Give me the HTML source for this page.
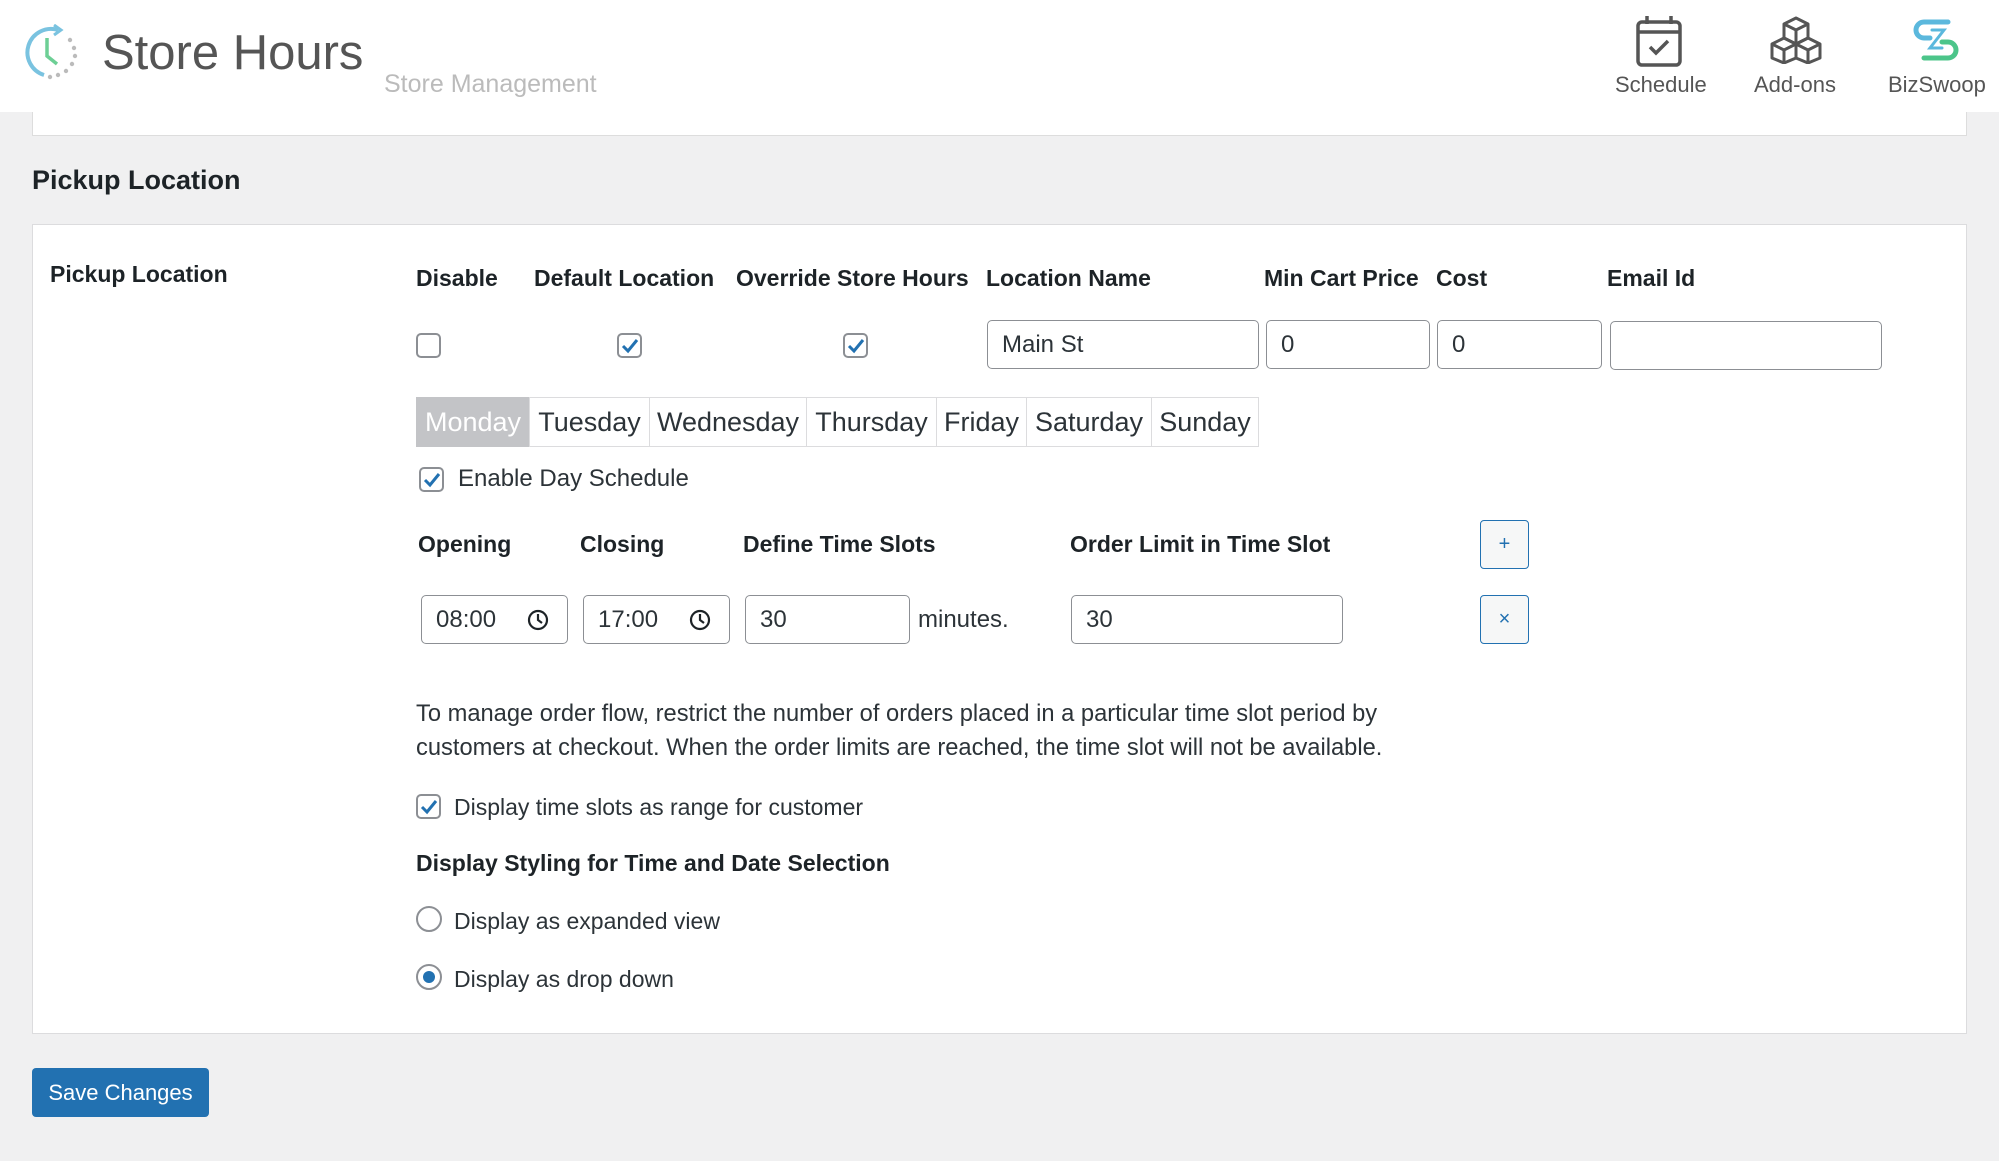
<!DOCTYPE html>
<html><head><meta charset="utf-8"><style>
*{box-sizing:border-box;margin:0;padding:0}
body{width:1999px;height:1161px;background:#f0f0f1;font-family:"Liberation Sans",sans-serif;color:#1d2327;position:relative;overflow:hidden}
.a{position:absolute;white-space:nowrap}
.hdr{left:0;top:0;width:1999px;height:112px;background:#fff}
.b{font-weight:bold;font-size:23px;color:#1d2327}
.cb{position:absolute;width:25px;height:25px;border:2px solid #8c8f94;border-radius:5px;background:#fff}
.cb svg{position:absolute;left:2px;top:2px}
.inp{position:absolute;border:1.5px solid #8c8f94;border-radius:5px;background:#fff;font-size:24px;color:#2c3338;padding-left:14px;display:flex;align-items:center}
.tab{position:absolute;top:397px;height:50px;border:1.5px solid #dcdcde;background:#fff;font-size:27px;color:#2c3338;display:flex;align-items:center;justify-content:center}
.btn{position:absolute;width:49px;height:49px;border:1.5px solid #2271b1;border-radius:4px;background:#f6f7f7;color:#2271b1;font-size:20px;display:flex;align-items:center;justify-content:center}
.t{font-size:23px;color:#2c3338}
.radio{position:absolute;width:26px;height:26px;border:2px solid #8c8f94;border-radius:50%;background:#fff}
</style></head><body>
<div class="a hdr"></div>
<svg class="a" style="left:24px;top:24px" width="58" height="58" viewBox="0 0 58 58">
<path d="M34 6 A23 23 0 1 0 20 51" fill="none" stroke="#7ac3e0" stroke-width="4"/>
<path d="M30 1 L37 6 L30 11" fill="none" stroke="#7ac3e0" stroke-width="3"/>
<path d="M23 14 V32 L33 40" fill="none" stroke="#6dcf95" stroke-width="3.5"/>
<g fill="#bbb"><circle cx="46" cy="16" r="2.2"/><circle cx="50" cy="24" r="2.2"/><circle cx="51" cy="32" r="2.2"/><circle cx="48" cy="40" r="2.2"/><circle cx="42" cy="47" r="2.2"/><circle cx="34" cy="51" r="2.2"/><circle cx="26" cy="53" r="2.2"/></g>
</svg>
<div class="a" style="left:102px;top:25px;font-size:49px;color:#555">Store Hours</div>
<div class="a" style="left:384px;top:70px;font-size:25px;color:#bbb">Store Management</div>
<svg class="a" style="left:1635px;top:14px" width="48" height="54" viewBox="0 0 48 54"><rect x="3" y="8" width="42" height="43" rx="4" fill="none" stroke="#555" stroke-width="3.5"/><line x1="3" y1="18" x2="45" y2="18" stroke="#555" stroke-width="3.5"/><line x1="12" y1="2" x2="12" y2="10" stroke="#555" stroke-width="3.5"/><line x1="36" y1="2" x2="36" y2="10" stroke="#555" stroke-width="3.5"/><path d="M15 33 L21 39 L33 27" fill="none" stroke="#555" stroke-width="3.5"/></svg>
<div class="a" style="left:1615px;top:72px;font-size:22px;color:#555">Schedule</div>
<svg class="a" style="left:1768px;top:16px" width="56" height="48" viewBox="0 0 56 48" fill="none" stroke="#555" stroke-width="3" stroke-linejoin="round"><path d="M28 2 L40 8 V22 L28 28 L16 22 V8 Z M16 8 L28 14 L40 8 M28 14 V28"/><path d="M16 22 L28 28 V42 L16 47 L4 42 V28 Z M4 28 L16 34 L28 28 M16 34 V47"/><path d="M40 22 L52 28 V42 L40 47 L28 42 V28 Z M28 28 L40 34 L52 28 M40 34 V47"/></svg>
<div class="a" style="left:1754px;top:72px;font-size:22px;color:#555">Add-ons</div>
<svg class="a" style="left:1910px;top:18px" width="52" height="44" viewBox="0 0 52 44" fill="none" stroke-width="5" stroke-linecap="round"><path d="M38 4 H14 A8 8 0 0 0 14 20 H20" stroke="#5bb8dd"/><path d="M14 40 H38 A8 8 0 0 0 38 24 H32" stroke="#4cc58a"/><path d="M22 12 H34 L20 30 H32" stroke="#5bb8dd" stroke-width="3"/></svg>
<div class="a" style="left:1888px;top:72px;font-size:22px;color:#555">BizSwoop</div>

<div class="a" style="left:32px;top:112px;width:1935px;height:24px;background:#fff;border:1px solid #ddd;border-top:none"></div>
<div class="a" style="left:32px;top:165px;font-size:27px;font-weight:bold">Pickup Location</div>

<div class="a" style="left:32px;top:224px;width:1935px;height:810px;background:#fff;border:1px solid #dcdcde"></div>
<div class="a b" style="left:50px;top:261px">Pickup Location</div>
<div class="a b" style="left:416px;top:265px">Disable</div>
<div class="a b" style="left:534px;top:265px">Default Location</div>
<div class="a b" style="left:736px;top:265px">Override Store Hours</div>
<div class="a b" style="left:986px;top:265px">Location Name</div>
<div class="a b" style="left:1264px;top:265px">Min Cart Price</div>
<div class="a b" style="left:1436px;top:265px">Cost</div>
<div class="a b" style="left:1607px;top:265px">Email Id</div>

<div class="cb" style="left:416px;top:333px"></div>
<div class="cb" style="left:617px;top:333px"><svg width="18" height="18" viewBox="0 0 18 18"><path d="M2 9 L7 14 L16 3" fill="none" stroke="#2271b1" stroke-width="3"/></svg></div>
<div class="cb" style="left:843px;top:333px"><svg width="18" height="18" viewBox="0 0 18 18"><path d="M2 9 L7 14 L16 3" fill="none" stroke="#2271b1" stroke-width="3"/></svg></div>

<div class="inp" style="left:987px;top:320px;width:272px;height:49px">Main St</div>
<div class="inp" style="left:1266px;top:320px;width:164px;height:49px">0</div>
<div class="inp" style="left:1437px;top:320px;width:165px;height:49px">0</div>
<div class="inp" style="left:1610px;top:321px;width:272px;height:49px"></div>

<div class="tab" style="left:416px;width:114px;background:#c3c4c7;color:#fff;border-color:#c3c4c7">Monday</div>
<div class="tab" style="left:529px;width:121px">Tuesday</div>
<div class="tab" style="left:649px;width:158px">Wednesday</div>
<div class="tab" style="left:806px;width:131px">Thursday</div>
<div class="tab" style="left:936px;width:91px">Friday</div>
<div class="tab" style="left:1026px;width:126px">Saturday</div>
<div class="tab" style="left:1151px;width:108px">Sunday</div>

<div class="cb" style="left:419px;top:467px"><svg width="18" height="18" viewBox="0 0 18 18"><path d="M2 9 L7 14 L16 3" fill="none" stroke="#2271b1" stroke-width="3"/></svg></div>
<div class="a t" style="left:458px;top:465px;font-size:24px">Enable Day Schedule</div>

<div class="a b" style="left:418px;top:531px">Opening</div>
<div class="a b" style="left:580px;top:531px">Closing</div>
<div class="a b" style="left:743px;top:531px">Define Time Slots</div>
<div class="a b" style="left:1070px;top:531px">Order Limit in Time Slot</div>
<div class="btn" style="left:1480px;top:520px">+</div>

<div class="inp" style="left:421px;top:595px;width:147px;height:49px">08:00<svg style="position:absolute;right:18px;top:13px" width="22" height="22" viewBox="0 0 22 22"><circle cx="11" cy="11" r="9" fill="none" stroke="#1d2327" stroke-width="2.2"/><path d="M11 5 V11 L15 14" fill="none" stroke="#1d2327" stroke-width="2.2"/></svg></div>
<div class="inp" style="left:583px;top:595px;width:147px;height:49px">17:00<svg style="position:absolute;right:18px;top:13px" width="22" height="22" viewBox="0 0 22 22"><circle cx="11" cy="11" r="9" fill="none" stroke="#1d2327" stroke-width="2.2"/><path d="M11 5 V11 L15 14" fill="none" stroke="#1d2327" stroke-width="2.2"/></svg></div>
<div class="inp" style="left:745px;top:595px;width:165px;height:49px">30</div>
<div class="a t" style="left:918px;top:606px;font-size:24px">minutes.</div>
<div class="inp" style="left:1071px;top:595px;width:272px;height:49px">30</div>
<div class="btn" style="left:1480px;top:595px">×</div>

<div class="a t" style="left:416px;top:697px;line-height:34px;font-size:23.7px">To manage order flow, restrict the number of orders placed in a particular time slot period by<br>customers at checkout. When the order limits are reached, the time slot will not be available.</div>

<div class="cb" style="left:416px;top:794px"><svg width="18" height="18" viewBox="0 0 18 18"><path d="M2 9 L7 14 L16 3" fill="none" stroke="#2271b1" stroke-width="3"/></svg></div>
<div class="a t" style="left:454px;top:794px">Display time slots as range for customer</div>
<div class="a b" style="left:416px;top:850px">Display Styling for Time and Date Selection</div>
<div class="radio" style="left:416px;top:906px"></div>
<div class="a t" style="left:454px;top:908px">Display as expanded view</div>
<div class="radio" style="left:416px;top:964px"><div style="position:absolute;left:5px;top:5px;width:12px;height:12px;border-radius:50%;background:#2271b1"></div></div>
<div class="a t" style="left:454px;top:966px">Display as drop down</div>

<div class="a" style="left:32px;top:1068px;width:177px;height:49px;background:#2271b1;border-radius:4px;color:#fff;font-size:22px;display:flex;align-items:center;justify-content:center">Save Changes</div>
</body></html>
